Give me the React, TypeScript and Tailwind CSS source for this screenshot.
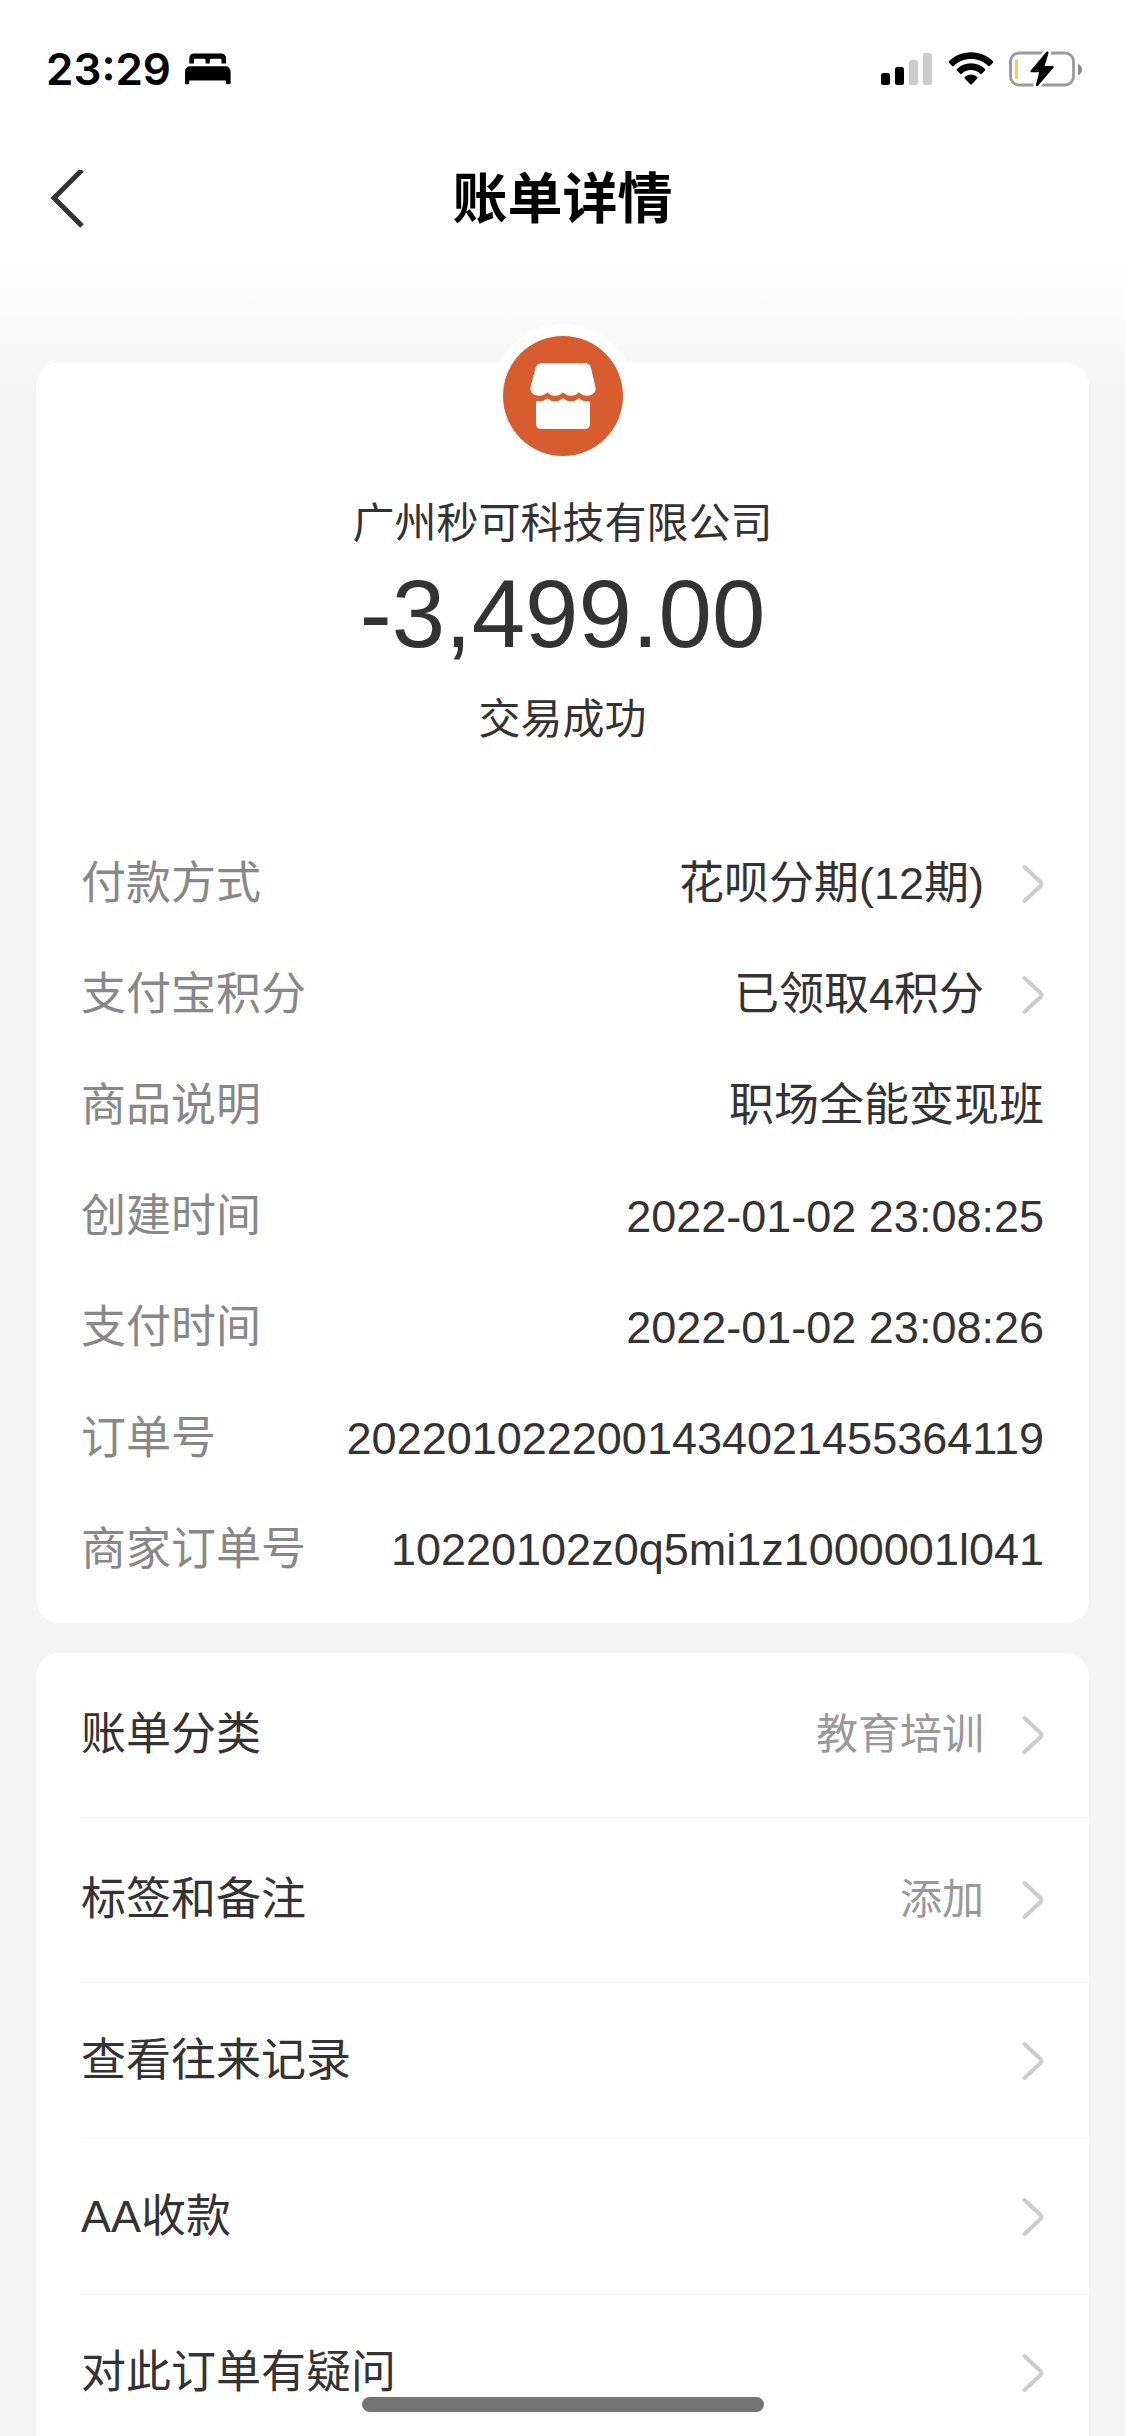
import type { ReactNode } from "react";

type Detail = {
  label: string;
  value: string;
  link?: boolean;
};

type Action = {
  label: string;
  value?: string;
  tall?: boolean;
};

const details: Detail[] = [
  { label: "付款方式", value: "花呗分期(12期)", link: true },
  { label: "支付宝积分", value: "已领取4积分", link: true },
  { label: "商品说明", value: "职场全能变现班" },
  { label: "创建时间", value: "2022-01-02 23:08:25" },
  { label: "支付时间", value: "2022-01-02 23:08:26" },
  { label: "订单号", value: "2022010222001434021455364119" },
  { label: "商家订单号", value: "10220102z0q5mi1z1000001l041" },
];

const actions: Action[] = [
  { label: "账单分类", value: "教育培训", tall: true },
  { label: "标签和备注", value: "添加", tall: true },
  { label: "查看往来记录" },
  { label: "AA收款" },
  { label: "对此订单有疑问" },
];

const Chevron = () => (
  <svg className="w-6 h-10 shrink-0" viewBox="0 0 24 40" fill="none" aria-hidden="true">
    <path
      d="M4.5 3 L20.5 18 Q22.3 20 20.5 22 L4.5 37"
      stroke="#cccccc"
      strokeWidth="4"
      strokeLinecap="round"
    />
  </svg>
);

const BedIcon = () => (
  <svg className="w-[46px] h-8" viewBox="0 0 46 32" aria-hidden="true">
    <path d="M4.3 10.5V5.5Q4.3 0.5 9.3 0.5H36Q41 0.5 41 5.5V10.5H36.5V7Q36.5 5.7 35.2 5.7H26.2Q24.8 5.7 24.8 7V10.5H20.6V7Q20.6 5.7 19.2 5.7H10.2Q8.9 5.7 8.9 7V10.5Z" />
    <path d="M0 19Q0 13.2 5.8 13.2H40Q45.6 13.2 45.6 19V30Q45.6 31.3 44.3 31.3H42.2Q41 31.3 41 30V27.5H4.2V30Q4.2 31.3 3 31.3H1.3Q0 31.3 0 30Z" />
  </svg>
);

const SignalIcon = () => (
  <svg className="w-[52px] h-8" viewBox="0 0 52 32" aria-hidden="true">
    <rect x="0" y="20" width="9" height="12" rx="2.5" />
    <rect x="14" y="14" width="9" height="18" rx="2.5" />
    <rect x="28" y="7" width="9" height="25" rx="2.5" fill="#cccccc" />
    <rect x="42" y="0" width="9" height="32" rx="2.5" fill="#cccccc" />
  </svg>
);

const WifiIcon = () => (
  <svg className="w-[46px] h-[34px]" viewBox="0 0 46 34" aria-hidden="true">
    <path d="M23 0.3C32 0.3 39.6 3.8 45 9.2Q45.7 10 45 10.8L41.8 13.9Q41 14.6 40.2 13.9C35.6 9.5 29.8 7 23 7S10.4 9.5 5.8 13.9Q5 14.6 4.2 13.9L1 10.8Q0.3 10 1 9.2C6.4 3.8 14 0.3 23 0.3Z" />
    <path d="M23 11.3C28.7 11.3 33.3 13.5 37 17Q37.7 17.8 37 18.6L33.8 21.7Q33 22.4 32.2 21.7C29.6 19.4 26.6 18.1 23 18.1S16.4 19.4 13.8 21.7Q13 22.4 12.2 21.7L9 18.6Q8.3 17.8 9 17C12.7 13.5 17.3 11.3 23 11.3Z" />
    <path d="M23 22.5C25.7 22.5 27.7 23.4 29.2 24.9Q29.9 25.7 29.2 26.5L23.8 32.2Q23 33 22.2 32.2L16.8 26.5Q16.1 25.7 16.8 24.9C18.3 23.4 20.3 22.5 23 22.5Z" />
  </svg>
);

const BatteryIcon = () => (
  <svg className="w-[74px] h-9" viewBox="0 0 74 36" aria-hidden="true">
    <rect x="1.5" y="2" width="63" height="32" rx="8.5" fill="none" stroke="#9b9b9b" strokeWidth="2.8" />
    <path d="M69 12.5Q73 14.5 73 18.5T69 24.5Z" fill="#8c8c8c" />
    <rect x="6" y="8" width="3" height="20" rx="1.5" fill="#f7ce45" />
    <path
      d="M37.5 0.8L21.5 19.8Q21 21.2 22.2 21.2H30.2L26.8 34.2Q27.4 36 29 34.8L44.6 16.6Q45.2 15 43.8 15H35.6L39.6 2Q39.4 0 37.5 0.8Z"
      stroke="#ffffff"
      strokeWidth="5"
      paintOrder="stroke"
    />
  </svg>
);

const StoreLogo = () => (
  <svg className="w-[120px] h-[120px]" viewBox="0 0 120 120" role="img" aria-label="商家">
    <circle cx="60" cy="60" r="60" fill="#d75d2f" />
    <path
      d="M38.5 27.3H82.3Q87 27.3 88 32L92.5 51.5C93.2 57.5 88 59.7 84.3 59.7Q79 59.7 76 56.2Q72.5 59.7 68 59.7T60 56.2Q56.5 59.7 52 59.7T44.3 56.2Q41.2 59.7 36 59.7C32 59.7 26.8 57.5 27.5 51.5L32.5 32Q33.8 27.3 38.5 27.3Z"
      fill="#ffffff"
    />
    <path
      d="M33 65.5Q40.5 66 44.3 62.3Q48 65.5 52 65.5T60 62.3Q64 65.5 68 65.5T76 62.3Q80 66 87 65.5V87.5Q87 93 81.5 93H38.5Q33 93 33 87.5Z"
      fill="#ffffff"
    />
  </svg>
);

const Card = ({ children }: { children: ReactNode }) => (
  <section className="bg-white rounded-3xl">{children}</section>
);

const DetailRow = ({ label, value, link }: Detail) => (
  <div className="flex h-[111px] items-center justify-between">
    <dt className="text-[#888888]">{label}</dt>
    <dd className="text-right">
      {link ? (
        <button type="button" className="flex items-center gap-9">
          {value}
          <Chevron />
        </button>
      ) : (
        value
      )}
    </dd>
  </div>
);

const ActionRow = ({ label, value, tall }: Action) => (
  <li className="border-b border-[#f5f5f5] last:border-b-0">
    <a
      href="#"
      className={`flex items-center justify-between pr-[45px] ${tall ? "h-[164px]" : "h-[155px]"}`}
    >
      <span>{label}</span>
      <span className="flex items-center gap-9 text-[42px] text-[#999999]">
        {value}
        <Chevron />
      </span>
    </a>
  </li>
);

const App = () => {
  return (
    <div
      lang="zh-CN"
      className="flex h-screen flex-col overflow-hidden bg-[linear-gradient(#ffffff_260px,#f5f5f5_390px)] font-['Liberation_Sans','Noto_Sans_CJK_SC',sans-serif] text-[45px] leading-[60px] text-[#333333]"
    >
      {/* Status bar */}
      <div className="flex h-[138px] shrink-0 items-center justify-between pl-[46px] pr-[42px] text-black">
        <div className="flex items-center gap-[14px]">
          <span className="font-['Inter',sans-serif] text-[44px] font-semibold">23:29</span>
          <BedIcon />
        </div>
        <div className="flex items-center gap-[15px]">
          <SignalIcon />
          <WifiIcon />
          <BatteryIcon />
        </div>
      </div>

      {/* Title bar */}
      <header className="grid h-[122px] shrink-0 grid-cols-[1fr_auto_1fr] items-center px-[46px]">
        <button type="button" aria-label="返回" className="w-10">
          <svg className="w-10 h-[58px]" viewBox="0 0 40 58" fill="none" aria-hidden="true">
            <path d="M36 0L8 28L36 56" stroke="#333333" strokeWidth="5" />
          </svg>
        </button>
        <h1 className="text-[55px] font-bold text-black">账单详情</h1>
      </header>

      <main className="flex-1 space-y-[30px] overflow-y-auto px-9 pt-[102px] [scrollbar-width:none]">
        <Card>
          <div className="flex flex-col items-center text-[42px]">
            <div className="-mt-[38px] rounded-full bg-white p-3">
              <StoreLogo />
            </div>
            <h2 className="mt-[26px]">广州秒可科技有限公司</h2>
            <p className="mt-3 text-[96px] leading-[96px]">-3,499.00</p>
            <p className="mt-7">交易成功</p>
          </div>
          <dl className="mt-[78px] px-[45px] pb-[18px]">
            {details.map((item) => (
              <DetailRow key={item.label} {...item} />
            ))}
          </dl>
        </Card>

        <Card>
          <ul className="pb-8 pl-[45px]">
            {actions.map((item) => (
              <ActionRow key={item.label} {...item} />
            ))}
          </ul>
        </Card>
      </main>

      {/* Home indicator */}
      <div className="fixed bottom-6 left-1/2 h-[15px] w-[402px] -translate-x-1/2 rounded-full bg-[#747474]" />
    </div>
  );
};

export default App;
